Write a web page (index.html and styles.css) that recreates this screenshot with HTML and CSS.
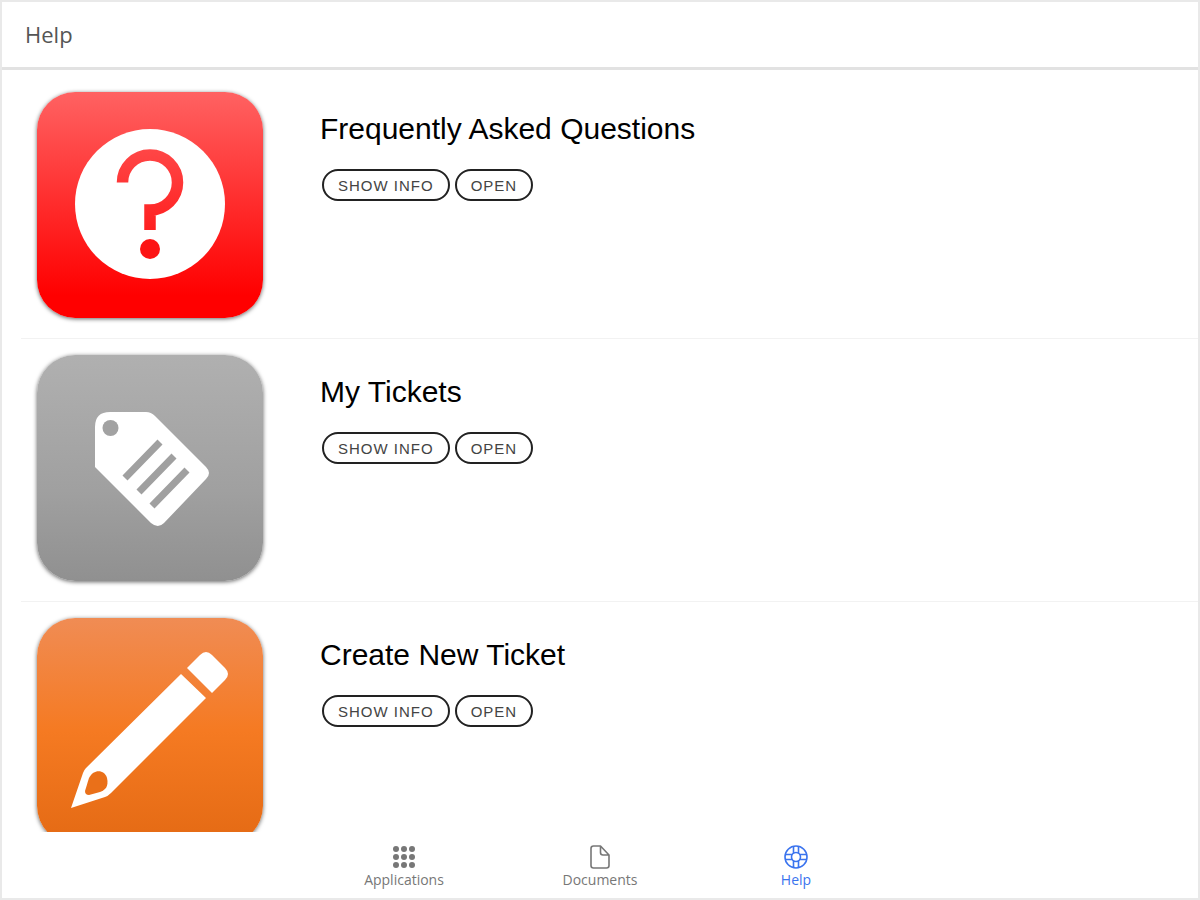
FILE: index.html
```html
<!DOCTYPE html>
<html lang="en">
<head>
  <meta charset="UTF-8">
  <meta name="viewport" content="width=device-width, initial-scale=1.0">
  <title>Help</title>
  <link rel="stylesheet" href="styles.css">
</head>
<body>
  <header class="header">
    <h1>Help</h1>
  </header>

  <main class="content">
    <section class="item">
      <div class="app-icon red">
        <svg viewBox="0 0 226 226" aria-hidden="true">
          <defs>
            <linearGradient id="redFill" gradientUnits="userSpaceOnUse" x1="0" y1="0" x2="0" y2="226">
              <stop offset="0" stop-color="#ff6262"/>
              <stop offset="0.9" stop-color="#ff0000"/>
            </linearGradient>
          </defs>
          <circle cx="113" cy="112" r="75" fill="#fff"/>
          <path d="M85.5 90.5A27.5 27.5 0 1 1 113 118V138" fill="none" stroke="url(#redFill)" stroke-width="11.5"/>
          <circle cx="113" cy="157" r="10" fill="#fc1414"/>
        </svg>
      </div>
      <div class="info">
        <h2>Frequently Asked Questions</h2>
        <div class="buttons">
          <button type="button">SHOW INFO</button>
          <button type="button">OPEN</button>
        </div>
      </div>
    </section>

    <section class="item">
      <div class="app-icon gray">
        <svg viewBox="0 0 226 226" aria-hidden="true">
          <path d="M73 57H109Q114 57 118 61L169 112Q175 118 169 124L127 168Q121 174 114 168L58 112V72Q58 57 73 57Z" fill="#fff"/>
          <circle cx="73.5" cy="73" r="8" fill="#a2a2a2"/>
          <path d="M123 87 88 123M137 101 102 137M150 115 115 151" stroke="#a0a0a0" stroke-width="7"/>
        </svg>
      </div>
      <div class="info">
        <h2>My Tickets</h2>
        <div class="buttons">
          <button type="button">SHOW INFO</button>
          <button type="button">OPEN</button>
        </div>
      </div>
    </section>

    <section class="item">
      <div class="app-icon orange">
        <svg viewBox="0 0 226 226" aria-hidden="true">
          <path d="M144 56 169 80 74 175Q71 178 68 179L34 190 46 155Q47 152 49 150Z" fill="#fff"/>
          <path d="M150 50 163 37Q169 31 175 37L188 50Q194 56 188 62L175 75Z" fill="#fff"/>
          <path d="M52 160C57 150 68 152 70 160C72 169 68 172 63 174L52 177Q48 177 48 173Z" fill="#ea7019"/>
        </svg>
      </div>
      <div class="info">
        <h2>Create New Ticket</h2>
        <div class="buttons">
          <button type="button">SHOW INFO</button>
          <button type="button">OPEN</button>
        </div>
      </div>
    </section>
  </main>

  <nav class="tabs">
    <a href="#applications">
      <svg viewBox="0 0 24 24" fill="currentColor" aria-hidden="true">
        <circle cx="4" cy="4" r="3"/><circle cx="12" cy="4" r="3"/><circle cx="20" cy="4" r="3"/>
        <circle cx="4" cy="12" r="3"/><circle cx="12" cy="12" r="3"/><circle cx="20" cy="12" r="3"/>
        <circle cx="4" cy="20" r="3"/><circle cx="12" cy="20" r="3"/><circle cx="20" cy="20" r="3"/>
      </svg>
      Applications
    </a>
    <a href="#documents">
      <svg viewBox="0 0 24 24" fill="none" stroke="currentColor" stroke-width="1.6" stroke-linejoin="round" aria-hidden="true">
        <path d="M21 10V20.5Q21 23 18.500 23H5.500Q3 23 3 20.500V3.500Q3 1 5.500 1H12.500L21 10H15Q12.500 10 12.500 7.500V1"/>
      </svg>
      Documents
    </a>
    <a href="#help" class="active">
      <svg viewBox="0 0 24 24" fill="none" stroke="currentColor" stroke-width="1.6" aria-hidden="true">
        <circle cx="12" cy="12" r="11"/>
        <circle cx="12" cy="12" r="4.5"/>
        <path d="M9.5 1.5V8.500M14.5 1.5V8.500M9.5 15.5V22.5M14.5 15.5V22.5M1.5 9.5H8.500M1.5 14.5H8.500M15.5 9.5H22.5M15.5 14.5H22.5"/>
      </svg>
      Help
    </a>
  </nav>
</body>
</html>
```
FILE: styles.css
```css
* {
  box-sizing: border-box;
}
body {
  display: flex;
  flex-direction: column;
  height: 100vh;
  margin: 0;
  border: 2px solid #e9e9e9;
  background-color: #fff;
  color: #000;
  font-family: "Liberation Sans", Arial, sans-serif;
}
h1, h2 {
  margin: 0;
  font-weight: 400;
}
.header {
  padding: 16px 23px;
  border-bottom: 3px solid #e2e2e2;
}
.header h1 {
  color: #555;
  font-family: "Open Sans", sans-serif;
  font-size: 22px;
  font-weight: 500;
  line-height: 33px;
}
.content {
  flex: 1;
  min-height: 0;
  padding-top: 6px;
  overflow-y: auto;
  scrollbar-width: none;
}
.item {
  display: flex;
  gap: 57px;
  margin-left: 19px;
  padding: 16px;
  padding-bottom: 20px;
  border-bottom: 1px solid #f2f2f2;
}
.app-icon {
  flex: none;
  width: 226px;
  height: 226px;
  border-radius: 38px;
  box-shadow: 0 1px 4px rgba(0, 0, 0, 0.6);
}
.app-icon svg {
  display: block;
}
.red {
  background: linear-gradient(#ff6262, #ff0000 90%);
}
.gray {
  background: linear-gradient(#b0b0b0, #a0a0a0 60%, #909090);
}
.orange {
  background: linear-gradient(#f08c54, #f57a22 50%, #e46a14);
}
.info {
  padding-top: 19px;
}
.info h2 {
  font-size: 30px;
  line-height: 36px;
}
.buttons {
  display: flex;
  gap: 5px;
  margin-top: 22px;
  padding-left: 2px;
}
.buttons button {
  height: 32px;
  padding: 0 14px;
  border: 2px solid #222;
  border-radius: 16px;
  background: transparent;
  color: #444;
  font-family: inherit;
  font-size: 15px;
  letter-spacing: 1px;
}
.tabs {
  display: flex;
  justify-content: center;
  height: 66px;
}
.tabs a {
  display: flex;
  flex-direction: column;
  align-items: center;
  width: 196px;
  padding-top: 13px;
  gap: 2px;
  color: #777;
  font-family: "Open Sans", sans-serif;
  font-size: 14px;
  line-height: 18px;
  text-decoration: none;
}
.tabs svg {
  width: 24px;
  height: 24px;
}
.tabs .active {
  color: #3b74ee;
}
```
